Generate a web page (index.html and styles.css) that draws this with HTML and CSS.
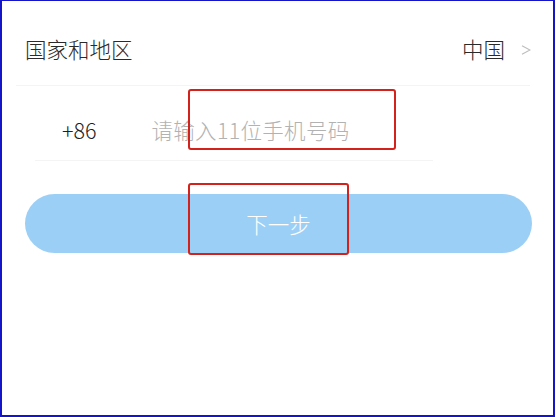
FILE: index.html
```html
<!DOCTYPE html>
<html lang="zh-CN">
<head>
<meta charset="utf-8">
<title>登录</title>
<link rel="stylesheet" href="styles.css">
</head>
<body>
<div class="frame">
  <div class="row region">
    <span class="label">国家和地区</span>
    <span class="value">
      <span>中国</span>
      <svg class="chev" width="10" height="10" viewBox="0 0 10 10"><polyline points="1,0.8 9,5 1,9.2" fill="none" stroke="#bcbcbc" stroke-width="1.1"/></svg>
    </span>
  </div>
  <div class="divider first"></div>
  <div class="row phone">
    <span class="code">+86</span>
    <span class="placeholder">请输入11位手机号码</span>
  </div>
  <div class="divider second"></div>
  <div class="btn-wrap">
    <button class="next">下一步</button>
  </div>
  <div class="mark mark-input"></div>
  <div class="mark mark-btn"></div>
</div>
</body>
</html>
```
FILE: styles.css
```css
html, body {
  margin: 0;
  padding: 0;
  background: #fff;
}
body {
  font-family: "Noto Sans CJK SC", "Noto Sans", sans-serif;
}
.frame {
  position: relative;
  box-sizing: border-box;
  width: 555px;
  height: 417px;
  border: 2px solid #1414c8;
  border-top-width: 1px;
  background: #fff;
  overflow: hidden;
}
.row {
  display: flex;
  align-items: center;
  box-sizing: border-box;
}
.region {
  height: 84px;
  padding: 10px 22px 0 23px;
  justify-content: space-between;
}
.label {
  font-size: 21.5px;
  font-weight: 300;
  color: #2a2a2a;
}
.value {
  display: flex;
  align-items: center;
  gap: 16px;
  font-size: 21.5px;
  font-weight: 300;
  color: #2a2a2a;
}
.chev {
  margin-top: 4px;
}
.divider {
  height: 1px;
  background: #f4f4f4;
}
.divider.first {
  margin: 0 23px 0 14px;
}
.divider.second {
  margin: 0 120px 0 33px;
}
.phone {
  height: 74px;
  padding: 12px 0 0 60px;
  gap: 55px;
}
.code {
  font-size: 21.5px;
  font-weight: 300;
  color: #1e1e1e;
}
.placeholder {
  font-size: 21.5px;
  font-weight: 300;
  letter-spacing: 0.3px;
  color: #b2b2b2;
}
.btn-wrap {
  padding: 33px 21px 0 23px;
}
.next {
  display: block;
  width: 100%;
  height: 59px;
  border: none;
  border-radius: 30px;
  background: #9ccff6;
  color: #fff;
  font-family: "Noto Sans CJK SC", "Noto Sans", sans-serif;
  font-size: 21.5px;
  font-weight: 300;
  padding: 0;
}
.mark {
  position: absolute;
  box-sizing: border-box;
  border: 2px solid #d3221c;
  border-radius: 3px;
}
.mark-input {
  left: 186px;
  top: 88px;
  width: 208px;
  height: 61px;
}
.mark-btn {
  left: 186px;
  top: 182px;
  width: 161px;
  height: 72px;
}
```
